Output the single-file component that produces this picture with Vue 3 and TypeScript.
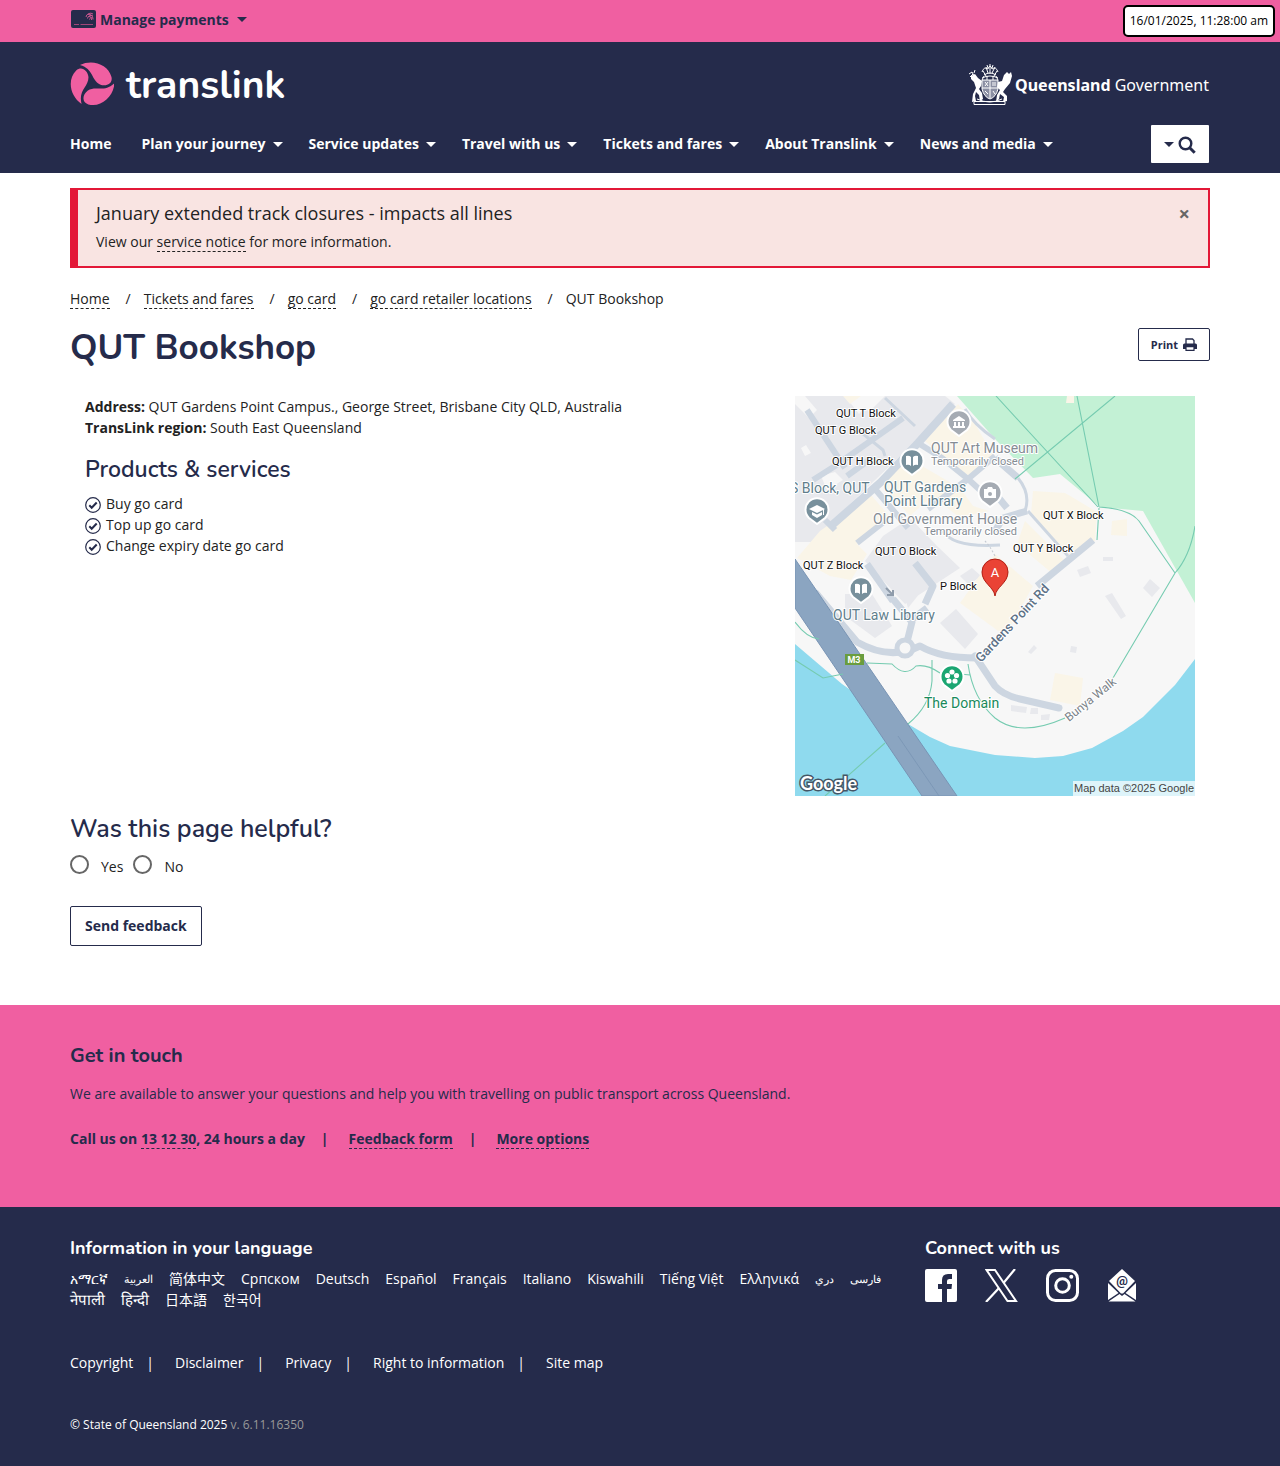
<script setup lang="ts">
import { ref } from 'vue'

interface MapLabel {
  x: number
  y: number
  text: string
  kind: string
}

interface Language {
  name: string
  script?: string
}

const navItems = [
  'Home',
  'Plan your journey',
  'Service updates',
  'Travel with us',
  'Tickets and fares',
  'About Translink',
  'News and media',
]
const crumbs = ['Home', 'Tickets and fares', 'go card', 'go card retailer locations']
const services = ['Buy go card', 'Top up go card', 'Change expiry date go card']
const languages: Language[] = [
  { name: 'አማርኛ' },
  { name: 'العربية', script: 'arabic' },
  { name: '简体中文' },
  { name: 'Српском' },
  { name: 'Deutsch' },
  { name: 'Español' },
  { name: 'Français' },
  { name: 'Italiano' },
  { name: 'Kiswahili' },
  { name: 'Tiếng Việt' },
  { name: 'Ελληνικά' },
  { name: 'دري', script: 'arabic' },
  { name: 'فارسی', script: 'arabic' },
  { name: 'नेपाली', script: 'devanagari' },
  { name: 'हिन्दी', script: 'devanagari' },
  { name: '日本語' },
  { name: '한국어' },
]
const legal = ['Copyright', 'Disclaimer', 'Privacy', 'Right to information', 'Site map']

const labels: MapLabel[] = [
  { x: 41, y: 21, text: 'QUT T Block', kind: 'block' },
  { x: 20, y: 38, text: 'QUT G Block', kind: 'block' },
  { x: 37, y: 69, text: 'QUT H Block', kind: 'block' },
  { x: 80, y: 159, text: 'QUT O Block', kind: 'block' },
  { x: 8, y: 173, text: 'QUT Z Block', kind: 'block' },
  { x: 145, y: 194, text: 'P Block', kind: 'block' },
  { x: 248, y: 123, text: 'QUT X Block', kind: 'block' },
  { x: 218, y: 156, text: 'QUT Y Block', kind: 'block' },
  { x: 136, y: 57, text: 'QUT Art Museum', kind: 'closed' },
  { x: 136, y: 69, text: 'Temporarily closed', kind: 'closed-note' },
  { x: -5, y: 97, text: 'S Block, QUT', kind: 'place' },
  { x: 89, y: 96, text: 'QUT Gardens', kind: 'place' },
  { x: 89, y: 110, text: 'Point Library', kind: 'place' },
  { x: 78, y: 128, text: 'Old Government House', kind: 'closed' },
  { x: 129, y: 139, text: 'Temporarily closed', kind: 'closed-note' },
  { x: 38, y: 224, text: 'QUT Law Library', kind: 'place' },
  { x: 129, y: 312, text: 'The Domain', kind: 'park' },
]

const alertOpen = ref(true)
const helpful = ref('')
</script>

<template>
  <div class="page">
    <div class="topbar">
      <div class="container topbar-row">
        <button class="payments" type="button">
          <svg width="25" height="18" viewBox="0 0 25 18" aria-hidden="true">
            <rect width="25" height="18" rx="2" fill="#252b4b" />
            <path d="M3 14.5h5M9.500 14.500h12.500" stroke="#a04579" stroke-width="1" />
            <g fill="none" stroke="#f05fa1" stroke-width="0.8">
              <path d="M15 7a4.500 4.500 0 0 1 7-3M16.500 8.500a3.500 3.500 0 0 1 5.500-2.500M18.500 9.500a2 2 0 0 1 3-1.500M17 4.500c3-1 5 2 5 5M18 6.500c2 0 2.500 1 2.500 3.500" />
            </g>
          </svg>
          Manage payments
          <span class="caret"></span>
        </button>
        <time class="clock">16/01/2025, 11:28:00 am</time>
      </div>
    </div>

    <header class="header">
      <div class="container brand-row">
        <a class="logo" href="#" aria-label="translink">
          <svg width="44" height="44" viewBox="0 0 44 44" aria-hidden="true">
            <g fill="#f05fa1">
              <path d="M10 3C22-3 38 2 41.500 15C43 22 36 25 30 22.500C21 18 24 7 10 3Z" />
              <path d="M10 3C22-3 38 2 41.500 15C43 22 36 25 30 22.500C21 18 24 7 10 3Z" transform="rotate(120 22 22)" />
              <path d="M10 3C22-3 38 2 41.500 15C43 22 36 25 30 22.500C21 18 24 7 10 3Z" transform="rotate(240 22 22)" />
            </g>
          </svg>
          <span>translink</span>
        </a>
        <a class="gov" href="#">
          <svg width="44" height="42" viewBox="0 0 44 42" aria-hidden="true">
            <g fill="none" stroke="#fff" stroke-width="1">
              <path d="M14 9q2-6 6-3 2-6 4 0 4-3 6 3M16 12q6-4 12 0M15 8l3 5M29 8l-3 5M18 4l2 6M27 4l-3 6M22 1v10M19 2l1 3M25 2l-1 3" />
              <path d="M14 15q8-4 16 0M16 13l-2 4M28 13l2 4M19 13v4M25 13v4" />
              <path d="M14 17h16v9q-2 8-8 10-6-2-8-10Z" fill="#8b8fa3" />
              <path d="M22 17v18M14 25h16M17 19l3 4M20 19l-3 4M25 19v4M27 19v4M17 28l3 3M25 28l2 3" />
              <path d="M6 38.500h31v3H6zM9 36q13 6 25 0M1 11l3-2 2 4M2 14l3-3M6 10l1-3" />
            </g>
            <g fill="#fff">
              <path d="M3 13l4-2 3 4 4 3-1 5-2 3 3 4 1 6-3 2-1-6-3-3-1 4 1 5-4 1 1-8 3-6-2-6-3-3Z" />
              <path d="M30 19l4-1 2-6 3-3 2 2 2-2 1 4-2 7-5 6-2 3 4 4v5l-4 1 1-5-4-3-1 5-3 3 1-7 3-5-3-3Z" />
            </g>
          </svg>
          <span><b>Queensland</b> Government</span>
        </a>
      </div>
      <div class="container nav-row">
        <nav class="nav" aria-label="Main">
          <a v-for="(item, i) in navItems" :key="item" href="#">
            {{ item }}<span v-if="i > 0" class="caret"></span>
          </a>
        </nav>
        <button class="search" type="button" aria-label="Search">
          <span class="caret small"></span>
          <svg width="18" height="20" viewBox="0 0 18 20" fill="none" stroke="#252b4b" aria-hidden="true">
            <circle cx="7.500" cy="9.500" r="5.800" stroke-width="2.400" />
            <path d="M11.700 13.700l5 5" stroke-width="3" />
          </svg>
        </button>
      </div>
    </header>

    <main class="container main">
      <div v-if="alertOpen" class="alert" role="alert">
        <div>
          <h2>January extended track closures - impacts all lines</h2>
          <p>View our <a class="dashed" href="#">service notice</a> for more information.</p>
        </div>
        <button class="close" type="button" aria-label="Close" @click="alertOpen = false">×</button>
      </div>

      <nav class="crumbs" aria-label="Breadcrumb">
        <template v-for="crumb in crumbs" :key="crumb">
          <a class="dashed" href="#">{{ crumb }}</a><span class="slash">/</span>
        </template>
        <span>QUT Bookshop</span>
      </nav>

      <div class="title-row">
        <h1>QUT Bookshop</h1>
        <button class="outline print" type="button">
          Print
          <svg width="14" height="13" viewBox="0 0 14 13" aria-hidden="true">
            <path d="M3 6V1h6.500L11 2.500V6" fill="#fff" stroke="#252b4b" stroke-width="1.300" />
            <path d="M0 7q0-1.500 1.500-1.500h11Q14 5.500 14 7v4H0Z" fill="#252b4b" />
            <path d="M3 8.700h8v3.600H3z" fill="#fff" stroke="#252b4b" stroke-width="1.200" />
          </svg>
        </button>
      </div>

      <div class="columns">
        <section class="details">
          <p><b>Address:</b> QUT Gardens Point Campus., George Street, Brisbane City QLD, Australia</p>
          <p><b>TransLink region:</b> South East Queensland</p>
          <h3>Products &amp; services</h3>
          <ul>
            <li v-for="service in services" :key="service">
              <svg width="16" height="18" viewBox="0 0 16 18" fill="none" stroke="#252b4b" aria-hidden="true">
                <circle cx="8" cy="10" r="7.300" stroke-width="1.200" />
                <path d="M4.300 10.300l2.400 2.400 5-5.200" stroke-width="2" />
              </svg>
              {{ service }}
            </li>
          </ul>
        </section>

        <svg class="map" width="400" height="400" viewBox="0 0 400 400" role="img" aria-label="Map of QUT Bookshop">
          <rect width="400" height="400" fill="#f7f7f7" />
          <path d="M162 0H400V207L348 115 305 111 265 78 238 82 200 43Z" fill="#c3f1d5" />
          <path d="M0 248 47 288 57 295 113 328 135 341 155 350 200 359 240 362 268 360 297 352 328 335 348 321 380 289 400 263V400H0Z" fill="#8fdaee" />
          <g fill="#e8e9ed">
            <path d="M0 8 14 22 22 14 10 0H50L64 18 80 0H150L160 8 124 42 32 130 30 138 16 146 0 146Z" />
            <path d="M88 140 115 122 142 150 165 172 110 208 70 165ZM165 180l12-8 9 8-12 9ZM50 198H77L97 230 80 242 50 220ZM108 195l25-8-20 25ZM161 213l22 25-13 15-25-26Z" />
            <path d="M355 183l10 9-8 9-9-9ZM282 174l11-4 3 7-11 4ZM308 161h10v4h-10ZM310 200l7-3 14 23-5 3ZM233 256l6-7 3 3-6 6ZM276 250l6 1-1 6-6-1ZM216 309l16 2-1 6-15-2ZM236 312h7v6h-8ZM246 319l9-1-1 6h-8Z" />
          </g>
          <g fill="#f7f7f7">
            <path d="M64 4 76 0 90 0 74 16ZM6 52l5-3 5 8-6 3ZM26 80l14-4 8 8-16 10Z" />
          </g>
          <g fill="#faf5e8">
            <path d="M163 8 180 28 200 62 174 80 150 62 130 45ZM113 62 165 92 178 110 194 115 164 121 137 100 115 120 84 86ZM76 99 96 122 62 148 72 158 56 184 35 180 2 162 25 135ZM48 0h18L55 8ZM238 95 270 97 277 101 302 116 300 145 275 160 236 118ZM230 125 270 165 258 178 222 148ZM200 158 238 190 210 240 165 207ZM317 125l15-2v17l-16-1ZM260 277l28 5-3 28-30-6ZM272 0h7v7h-8Z" />
          </g>
          <g fill="none" stroke="#cdd6e1" stroke-linejoin="round">
            <path d="M36 130 86 86 123 47 158 8" stroke-width="8" />
            <path d="M123 47 147 62 173 83 200 60M133 113 173 83 196 104M80 93 113 132M12 14 50 72M18 84 40 70 108 22M62 147 90 125M30 124 40 134M52 80 74 64" stroke-width="6" />
            <path d="M200 62 223 82M198 95 212 112M200 135 208 122 232 115M72 168 98 205M120 167 138 190 130 208" stroke-width="7" />
            <path d="M90 2 120 30M67 37 88 54 90 60M170 13Q178 28 200 43M223 82Q236 98 230 115M233 115 273 160M148 135Q158 152 205 149" stroke-width="3" />
            <path d="M298 144 242 190M20 196 62 246Q95 265 125 250 145 262 182 262M112 246 117 226 98 203M116 224 132 212" stroke-width="7" />
            <path d="M180 260 200 290Q208 299 225 303L264 312" stroke-width="7" stroke-linecap="round" />
            <circle cx="110" cy="252" r="8" stroke-width="5" fill="#f7f7f7" />
          </g>
          <path d="M0 163 162 400H127L0 212Z" fill="#8ba5c1" stroke="#7994b4" stroke-width="1" />
          <path d="M103 340 144 400" stroke="#7994b4" stroke-width="0.800" />
          <g fill="none" stroke="#75cbb0" stroke-width="1.100">
            <path d="M201 0 303 111M282 0 304 111M320 0 220 83M304 112 302 144M304 111Q335 113 344 125L380 177M400 130Q395 160 380 177L318 282M270 322Q225 342 200 322 178 303 173 268M0 226Q12 242 24 243M0 264 28 282 48 278M72 267 97 268Q110 282 121 270 132 268 145 277M137 264V285Q135 310 113 328M90 347 30 400M165 278 175 279" />
            <path d="M190 145Q195 150 200 160" stroke="#c5cbd3" stroke-dasharray="2 2" />
          </g>
          <path d="M91 192l7 7m0-5v5h-6" fill="none" stroke="#8f9cab" stroke-width="2" />

          <text
            v-for="label in labels"
            :key="label.text + label.y"
            :class="['map-text', label.kind]"
            :x="label.x"
            :y="label.y"
          >{{ label.text }}</text>
          <text class="map-text road" transform="translate(186 267) rotate(-47)">Gardens Point Rd</text>
          <text class="map-text walk" transform="translate(274 326) rotate(-39)">Bunya Walk</text>

          <g stroke="#fff" stroke-width="2">
            <path d="M164 40 156 34A11.500 11.500 0 1 1 172 34ZM195 111 187 105A11.500 11.500 0 1 1 203 105Z" fill="#a5abb3" />
            <path d="M117 79 109 73A11.500 11.500 0 1 1 125 73ZM22 128 14 122A11.500 11.500 0 1 1 30 122ZM66 207 58 201A11.500 11.500 0 1 1 74 201Z" fill="#78909c" />
            <path d="M157 295 149 289A11.500 11.500 0 1 1 165 289Z" fill="#1ba672" />
          </g>
          <g fill="#fff">
            <path d="M158 24 164 20l6 4v1h-12ZM159 26h2v4h-2ZM163 26h2v4h-2ZM167 26h2v4h-2ZM158 30h12v2h-12Z" />
            <path d="M111 60q3-1 5 1v9q-2-2-5-1ZM118 61q2-2 5-1v9q-3-1-5 1ZM60 188q3-1 5 1v9q-2-2-5-1ZM67 189q2-2 5-1v9q-3-1-5 1Z" />
            <path d="M14 113 22 109l8 4-8 4ZM17 116l5 2.500 5-2.500v3l-5 3-5-3ZM28 113h1v6h-1Z" />
            <path d="M189 93h3l1-2h4l1 2h3v9h-12Z" />
            <circle cx="157" cy="276" r="2.600" /><circle cx="161.500" cy="279.500" r="2.600" /><circle cx="160" cy="285" r="2.600" />
            <circle cx="154" cy="285" r="2.600" /><circle cx="152.500" cy="279.500" r="2.600" />
          </g>
          <circle cx="195" cy="98" r="2" fill="#a5abb3" />
          <circle cx="157" cy="281" r="1.500" fill="#1ba672" />
          <path d="M200 200C199 191 187 187 187 176A13 13 0 0 1 213 176C213 187 201 191 200 200Z" fill="#ea4335" stroke="#b11d12" stroke-width="1" />
          <text class="pin" x="200" y="181" text-anchor="middle">A</text>
          <rect x="50" y="258" width="19" height="11" fill="#6a9d3e" />
          <text class="shield" x="59" y="267" text-anchor="middle">M3</text>
          <text class="google" x="5" y="394">Google</text>
          <rect x="278" y="385" width="122" height="15" fill="#fff" fill-opacity="0.700" />
          <text class="credit" x="279" y="396">Map data ©2025 Google</text>
        </svg>
      </div>

      <form class="feedback" @submit.prevent>
        <h2 id="helpful-title">Was this page helpful?</h2>
        <div class="choices" role="radiogroup" aria-labelledby="helpful-title">
          <input id="yes" v-model="helpful" type="radio" name="helpful" value="yes" />
          <label for="yes">Yes</label>
          <input id="no" v-model="helpful" type="radio" name="helpful" value="no" />
          <label for="no">No</label>
        </div>
        <button class="outline send" type="submit">Send feedback</button>
      </form>
    </main>

    <section class="touch">
      <div class="container">
        <h2>Get in touch</h2>
        <p>We are available to answer your questions and help you with travelling on public transport across Queensland.</p>
        <div class="contact">
          <span>Call us on <a class="dashed" href="#">13 12 30</a>, 24 hours a day</span>
          <span class="bar">|</span>
          <a class="dashed" href="#">Feedback form</a>
          <span class="bar">|</span>
          <a class="dashed" href="#">More options</a>
        </div>
      </div>
    </section>

    <footer class="footer">
      <div class="container">
        <div class="footer-top">
          <section class="languages">
            <h2>Information in your language</h2>
            <div class="language-list">
              <a v-for="language in languages" :key="language.name" :class="language.script" href="#">{{ language.name }}</a>
            </div>
          </section>
          <section class="connect">
            <h2>Connect with us</h2>
            <div class="social">
              <a href="#" aria-label="Facebook">
                <svg width="32" height="33" viewBox="0 0 32 33">
                  <path fill="#fff" d="M2 0H30Q32 0 32 2V31Q32 33 30 33H22V20H26.500L27 15H22V12Q22 10 24.500 10H27V5H23Q17 5 17 11V15H13V20H17V33H2Q0 33 0 31V2Q0 0 2 0Z" />
                </svg>
              </a>
              <a href="#" aria-label="X">
                <svg width="33" height="33" viewBox="0 0 33 33" fill="none" stroke="#fff">
                  <path d="M1.500 1H10L31 32H22.500Z" stroke-width="2" />
                  <path d="M30 0 18.500 14M14 19 1 33" stroke-width="2.200" />
                </svg>
              </a>
              <a href="#" aria-label="Instagram">
                <svg width="33" height="33" viewBox="0 0 33 33" fill="none" stroke="#fff">
                  <rect x="1.500" y="1.500" width="30" height="30" rx="8" stroke-width="3" />
                  <circle cx="16.500" cy="16.500" r="6.800" stroke-width="3" />
                  <circle cx="25.300" cy="7.700" r="2" fill="#fff" stroke="none" />
                </svg>
              </a>
              <a href="#" aria-label="Email newsletter">
                <svg width="30" height="33" viewBox="0 0 30 33">
                  <path d="M15 0 28 12 16 24.500H14L2 12ZM1 14 11.500 24 1 31ZM29 14V31L18.500 24ZM12.500 25 15 27 17.500 25 28.500 32.500H1.500Z" fill="#fff" />
                  <text class="at" x="15" y="16" text-anchor="middle">@</text>
                </svg>
              </a>
            </div>
          </section>
        </div>
        <nav class="legal" aria-label="Legal">
          <template v-for="(item, i) in legal" :key="item">
            <span v-if="i > 0" class="bar">|</span>
            <a href="#">{{ item }}</a>
          </template>
        </nav>
        <p class="copyright">© State of Queensland 2025 <span>v. 6.11.16350</span></p>
      </div>
    </footer>
  </div>
</template>

<style>
body {
  margin: 0;
  background: #fff;
}
</style>

<style scoped>
.page {
  font-family: "Open Sans", "Noto Sans CJK SC", sans-serif;
  font-size: 14px;
  line-height: 21px;
  color: #222;
}
.container {
  box-sizing: border-box;
  max-width: 1170px;
  margin: 0 auto;
  padding: 0 15px;
}
h1, h2, h3, p, ul {
  margin: 0;
  padding: 0;
}
h1, h2, h3 {
  font-family: Nunito, Lato, sans-serif;
  color: #252b4b;
}
a {
  color: inherit;
  text-decoration: none;
}
button {
  font: inherit;
  color: #252b4b;
  cursor: pointer;
}
.dashed {
  border-bottom: 1px dashed currentColor;
}
.caret {
  display: inline-block;
  border: 5px solid transparent;
  border-top-color: currentColor;
  border-bottom: 0;
  margin-left: 7px;
  vertical-align: 2px;
}
.caret.small {
  margin: 0;
}

.topbar {
  background: #f05fa1;
}
.topbar-row {
  max-width: none;
  padding: 0 5px 0 max(15px, calc((100% - 1140px) / 2));
  height: 42px;
  display: flex;
  align-items: center;
  justify-content: space-between;
}
.payments {
  display: flex;
  align-items: center;
  gap: 4px;
  padding: 0 0 3px 1px;
  border: 0;
  background: none;
  font-weight: 700;
}
.payments svg {
  margin-bottom: 2px;
}
.payments .caret {
  margin-left: 4px;
}
.clock {
  box-sizing: border-box;
  height: 32px;
  padding: 0 5px;
  border: 2px solid #000;
  border-radius: 5px;
  background: #fff;
  color: #000;
  font-size: 12px;
  line-height: 28px;
}

.header {
  background: #252b4b;
  color: #fff;
}
.header .container {
  padding-right: 16px;
}
.brand-row {
  display: flex;
  align-items: center;
  justify-content: space-between;
  height: 83px;
}
.logo {
  display: flex;
  align-items: center;
  gap: 12px;
  font: 750 39px/44px Nunito, Lato, sans-serif;
}
.logo span {
  padding-top: 4px;
}
.gov {
  display: flex;
  align-items: center;
  gap: 3px;
  font: 16px/42px "Noto Sans", sans-serif;
}
.gov span {
  padding-top: 2px;
}
.nav-row {
  display: flex;
  justify-content: space-between;
  height: 48px;
}
.nav {
  display: flex;
  gap: 26px;
  line-height: 38px;
  font-weight: 700;
}
.nav a:first-child {
  margin-right: 4px;
}
.search {
  display: flex;
  align-items: center;
  justify-content: center;
  gap: 4px;
  width: 58px;
  height: 38px;
  padding: 0;
  border: 0;
  border-radius: 1px;
  background: #fff;
}

.main {
  padding-top: 15px;
  padding-bottom: 59px;
}
.alert {
  display: flex;
  justify-content: space-between;
  align-items: flex-start;
  padding: 10px 18px 14px;
  border: 2px solid #e31837;
  border-left-width: 8px;
  background: #f9e4e2;
}
.alert h2 {
  margin-bottom: 4px;
  font: 400 18px/27px "Open Sans", sans-serif;
  color: #222;
}
.close {
  padding: 0;
  border: 0;
  background: none;
  color: #666;
  font-size: 20px;
  font-weight: 700;
  line-height: 28px;
}
.crumbs {
  margin-top: 20px;
}
.slash {
  margin: 0 13px 0 16px;
}
.title-row {
  display: flex;
  justify-content: space-between;
  align-items: flex-start;
  margin-top: 19px;
  height: 68px;
}
h1 {
  font-size: 35px;
  font-weight: 700;
  line-height: 40px;
}
.outline {
  border: 1px solid #252b4b;
  border-radius: 2px;
  background: #fff;
  font-weight: 700;
}
.print {
  display: flex;
  align-items: center;
  gap: 5px;
  height: 33px;
  padding: 0 12px;
  font-size: 11px;
}
.columns {
  display: flex;
  justify-content: space-between;
  padding: 0 15px;
}
h3 {
  margin: 18px 0 10px;
  font-size: 23px;
  font-weight: 650;
  line-height: 27px;
}
ul {
  list-style: none;
}
li {
  display: flex;
  align-items: center;
  gap: 5px;
}
.map {
  display: block;
  flex: none;
}
.map-text {
  font-family: Roboto, sans-serif;
  paint-order: stroke;
  stroke: #fff;
  stroke-width: 2px;
  stroke-linejoin: round;
}
.block {
  font-size: 11px;
  fill: #111;
}
.place {
  font-size: 14px;
  fill: #607d8b;
}
.closed {
  font-size: 14px;
  fill: #858c94;
}
.closed-note {
  font-size: 11px;
  fill: #858c94;
}
.park {
  font-size: 14px;
  fill: #188a5b;
}
.road {
  font-size: 13px;
  font-weight: 500;
  fill: #5d7186;
}
.walk {
  font-size: 12px;
  fill: #7b8288;
}
.pin {
  font: 13px Roboto, sans-serif;
  fill: #fff;
}
.shield {
  font: 700 9px Roboto, sans-serif;
  fill: #fff;
}
.google {
  font: 700 18px Lato, sans-serif;
  fill: #fff;
  paint-order: stroke;
  stroke: #456;
  stroke-width: 3px;
}
.credit {
  font: 11px "Liberation Sans", sans-serif;
  fill: #444;
}

.feedback {
  margin-top: 18px;
}
.feedback h2 {
  font-size: 25px;
  font-weight: 650;
  line-height: 30px;
}
.choices {
  display: flex;
  align-items: center;
  margin: 11px 0 29px;
}
.choices input {
  appearance: none;
  box-sizing: border-box;
  width: 19px;
  height: 19px;
  margin: 0 12px 3px 0;
  border: 2px solid #666;
  border-radius: 50%;
}
.choices input:checked {
  background: #252b4b;
}
.choices label {
  margin-right: 10px;
}
.send {
  height: 40px;
  padding: 0 14px 2px;
}

.touch {
  background: #f05fa1;
  color: #252b4b;
  padding: 37px 0 58px;
}
.touch h2 {
  font-size: 20px;
  font-weight: 700;
  line-height: 28px;
}
.touch p {
  margin: 13px 0 24px;
}
.contact {
  font-weight: 700;
}
.contact .bar {
  margin: 0 20px 0 16px;
}

.footer {
  padding: 28px 0 31px;
  background: #252b4b;
  color: #fff;
}
.footer h2 {
  color: #fff;
  font-size: 18px;
  line-height: 26px;
}
.footer-top {
  display: flex;
}
.languages {
  flex: 3;
}
.connect {
  flex: 1;
}
.language-list {
  display: flex;
  flex-wrap: wrap;
  gap: 0 16px;
  margin: 7px 30px 0 0;
}
.arabic {
  font-size: 11px;
}
.devanagari {
  font-size: 15px;
}
.social {
  display: flex;
  gap: 28px;
  margin-top: 8px;
}
.social svg {
  display: block;
}
.at {
  font: 700 13px Roboto, sans-serif;
  fill: #252b4b;
}
.legal {
  display: flex;
  margin-top: 42px;
}
.legal .bar {
  margin: 0 21px 0 13px;
}
.copyright {
  margin-top: 41px;
  font-size: 12px;
}
.copyright span {
  color: #999;
}
</style>
